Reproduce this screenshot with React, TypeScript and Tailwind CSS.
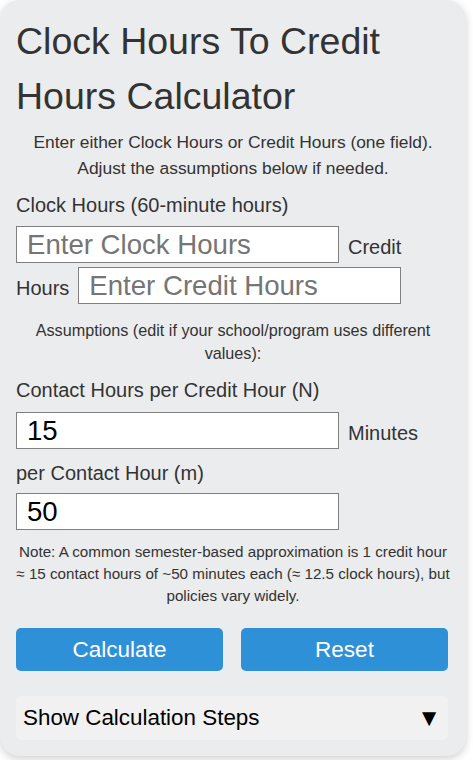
import React from "react";

const inputCls =
  "h-[37px] w-[323px] shrink-0 border border-[#808080] bg-white pl-[10px] text-[27.6px] text-black outline-none placeholder:text-[#757575]";

const labelCls = "text-[20px] leading-[24px] text-[#333]";

export default function App() {
  return (
    <div className="min-h-screen bg-white font-['Liberation_Sans',Arial,sans-serif]">
      <div className="w-[466px] rounded-[20px] bg-[#ebeced] px-4 pb-4 pt-[14px] shadow-[0_3px_8px_rgba(0,0,0,0.18)]">
        <h1 className="text-[37.5px] font-normal leading-[55px] text-[#333]">Clock Hours To Credit Hours Calculator</h1>
        <p className="mt-[5px] text-center text-[17.4px] leading-[26px] text-[#333]">
          Enter either Clock Hours or Credit Hours (one field). Adjust the assumptions below if needed.
        </p>

        <div className="mt-[12px]">
          <label className={labelCls + " block"}>Clock Hours (60-minute hours)</label>
          <div className="mt-[9px] flex items-baseline gap-[9px]">
            <input className={inputCls} placeholder="Enter Clock Hours" />
            <span className={labelCls}>Credit</span>
          </div>
          <div className="mt-[4px] flex items-baseline gap-[9px]">
            <span className={labelCls}>Hours</span>
            <input className={inputCls} placeholder="Enter Credit Hours" />
          </div>
        </div>

        <p className="mt-[15px] text-center text-[16.2px] leading-[23px] text-[#333]">
          Assumptions (edit if your school/program uses different values):
        </p>

        <div className="mt-[13px]">
          <label className={labelCls + " block"}>Contact Hours per Credit Hour (N)</label>
          <div className="mt-[10px] flex items-baseline gap-[9px]">
            <input className={inputCls} defaultValue="15" />
            <span className={labelCls}>Minutes</span>
          </div>
          <label className={labelCls + " mt-[12px] block"}>per Contact Hour (m)</label>
          <div className="mt-[8px] flex">
            <input className={inputCls} defaultValue="50" />
          </div>
        </div>

        <p className="mt-[11px] text-center text-[15.2px] leading-[22px] text-[#333]">
          Note: A common semester-based approximation is 1 credit hour ≈ 15 contact hours of ~50 minutes each (≈ 12.5
          clock hours), but policies vary widely.
        </p>

        <div className="mt-[21px] flex gap-[18px]">
          <button className="h-[43px] w-[207px] rounded-[5px] bg-[#2e91d8] text-[22.5px] text-white">Calculate</button>
          <button className="h-[43px] w-[207px] rounded-[5px] bg-[#2e91d8] text-[22.5px] text-white">Reset</button>
        </div>

        <div className="mt-[25px] flex h-[44px] w-[432px] items-center justify-between rounded-[6px] bg-[#f1f1f1] pl-[7px] pr-[7px] text-[22.4px] text-black">
          <span>Show Calculation Steps</span>
          <span className="text-[24px]">▼</span>
        </div>
      </div>
    </div>
  );
}
